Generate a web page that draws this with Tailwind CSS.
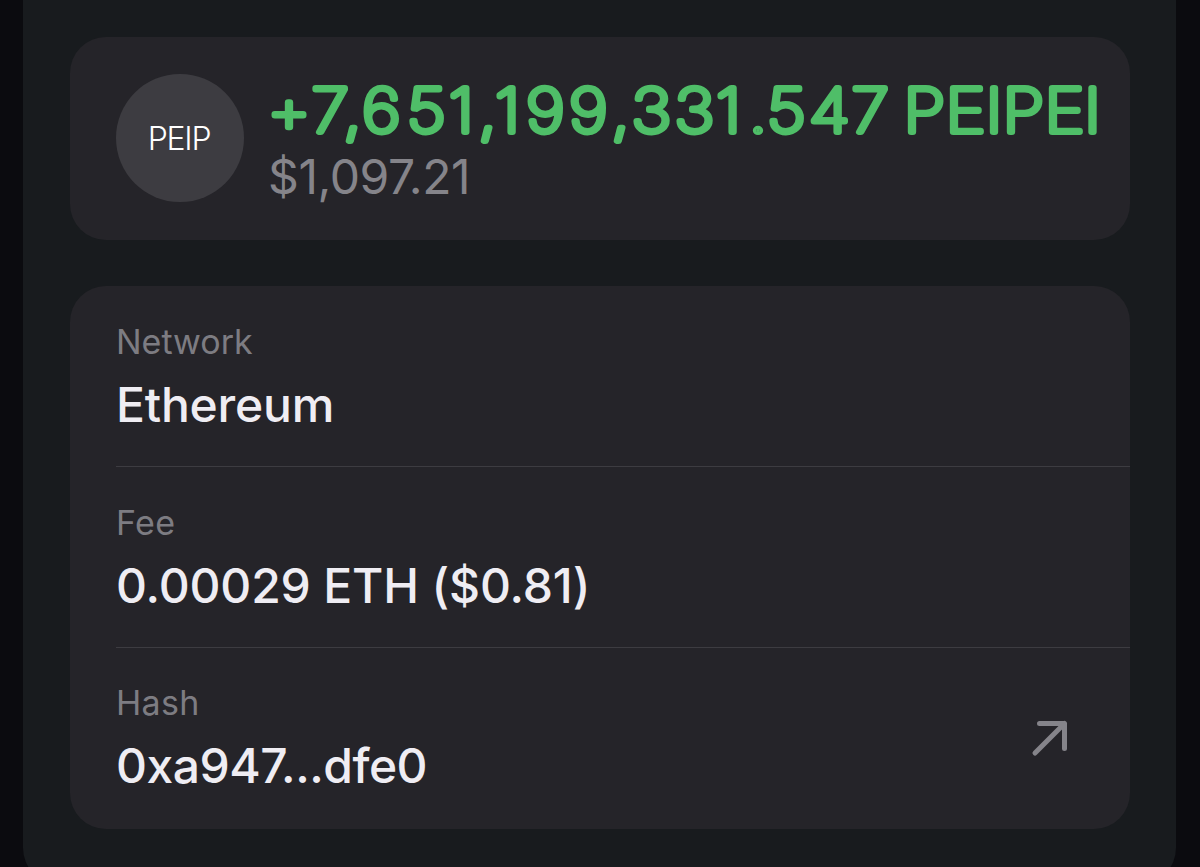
<!DOCTYPE html>
<html lang="en">
<head>
  <meta charset="UTF-8">
  <title>Transaction Details</title>
  <script src="https://cdn.jsdelivr.net/npm/@tailwindcss/browser@4"></script>
</head>
<body class="bg-[#0b0b0f] h-[867px] overflow-hidden font-['Inter',sans-serif] text-[#efedf3]">

  <main class="ml-[23px] mr-6 h-[884px] rounded-b-[36px] bg-[#181b1e] pl-[47px] pr-[46px] pt-[37px]">
    <section class="flex h-[203px] items-center rounded-[36px] bg-[#252429] pb-px pl-[46px]">
      <div class="flex size-32 shrink-0 items-center justify-center rounded-full bg-[#3d3c41] pt-0.5 pr-0.5 text-[32px] font-light tracking-[-1.3px] text-white">PEIP</div>
      <div class="ml-[23px] whitespace-nowrap">
        <!-- thin text with a round stroke gives the rounded letter ends -->
        <svg class="block h-[76px] w-[850px] overflow-visible fill-[#4fbe68] stroke-[#4fbe68] stroke-[6px] text-[60.5px] font-thin" stroke-linejoin="round" stroke-linecap="round" viewBox="267 70 850 76">
          <text transform="translate(270 0) scale(1.13 1)" y="132" x="-2.4 36.8 65.1 81.5 121.3 158.3 184.6 199.2 226.6 264.6 302.3 320 358 394.8 423.6 439.9 477.1 514.6 539.4 560.7 597.8 633.2 648.3 685.4 720.4">+7,651,199,331.547 PEIPEI</text>
        </svg>
        <p class="pt-0.5 pl-px text-[48px] leading-[58px] tracking-[-0.4px] text-[#85848a]">$1,097.21</p>
      </div>
    </section>

    <section class="mt-[46px] h-[543px] rounded-[36px] bg-[#252429] pl-[46px]">
      <div class="h-[181px] border-b border-[#3d3c41] pt-[34px]">
        <p class="text-[34px] leading-[44px] text-[#7d7c82]">Network</p>
        <p class="mt-[11px] text-[48px] leading-[60px] font-medium tracking-[-0.2px]">Ethereum</p>
      </div>
      <div class="h-[181px] border-b border-[#3d3c41] pt-[34px]">
        <p class="text-[34px] leading-[44px] tracking-[0.3px] text-[#7d7c82]">Fee</p>
        <p class="mt-[11px] text-[48px] leading-[60px] font-medium tracking-[-0.15px]">0.00029 ETH ($0.81)</p>
      </div>
      <div class="flex h-[180px] items-center justify-between pr-[61px]">
        <div>
          <p class="text-[34px] leading-[44px] tracking-[0.3px] text-[#7d7c82]">Hash</p>
          <p class="mt-[11px] text-[48px] leading-[60px] font-medium tracking-[-0.5px]">0xa947...dfe0</p>
        </div>
        <svg class="size-[38px]" viewBox="0 0 38 38" fill="none" stroke="#85848a" stroke-width="5" stroke-linecap="round" stroke-linejoin="round">
          <path d="M4 34 33.500 4.500M8.500 4.500h25v25"/>
        </svg>
      </div>
    </section>
  </main>

</body>
</html>
